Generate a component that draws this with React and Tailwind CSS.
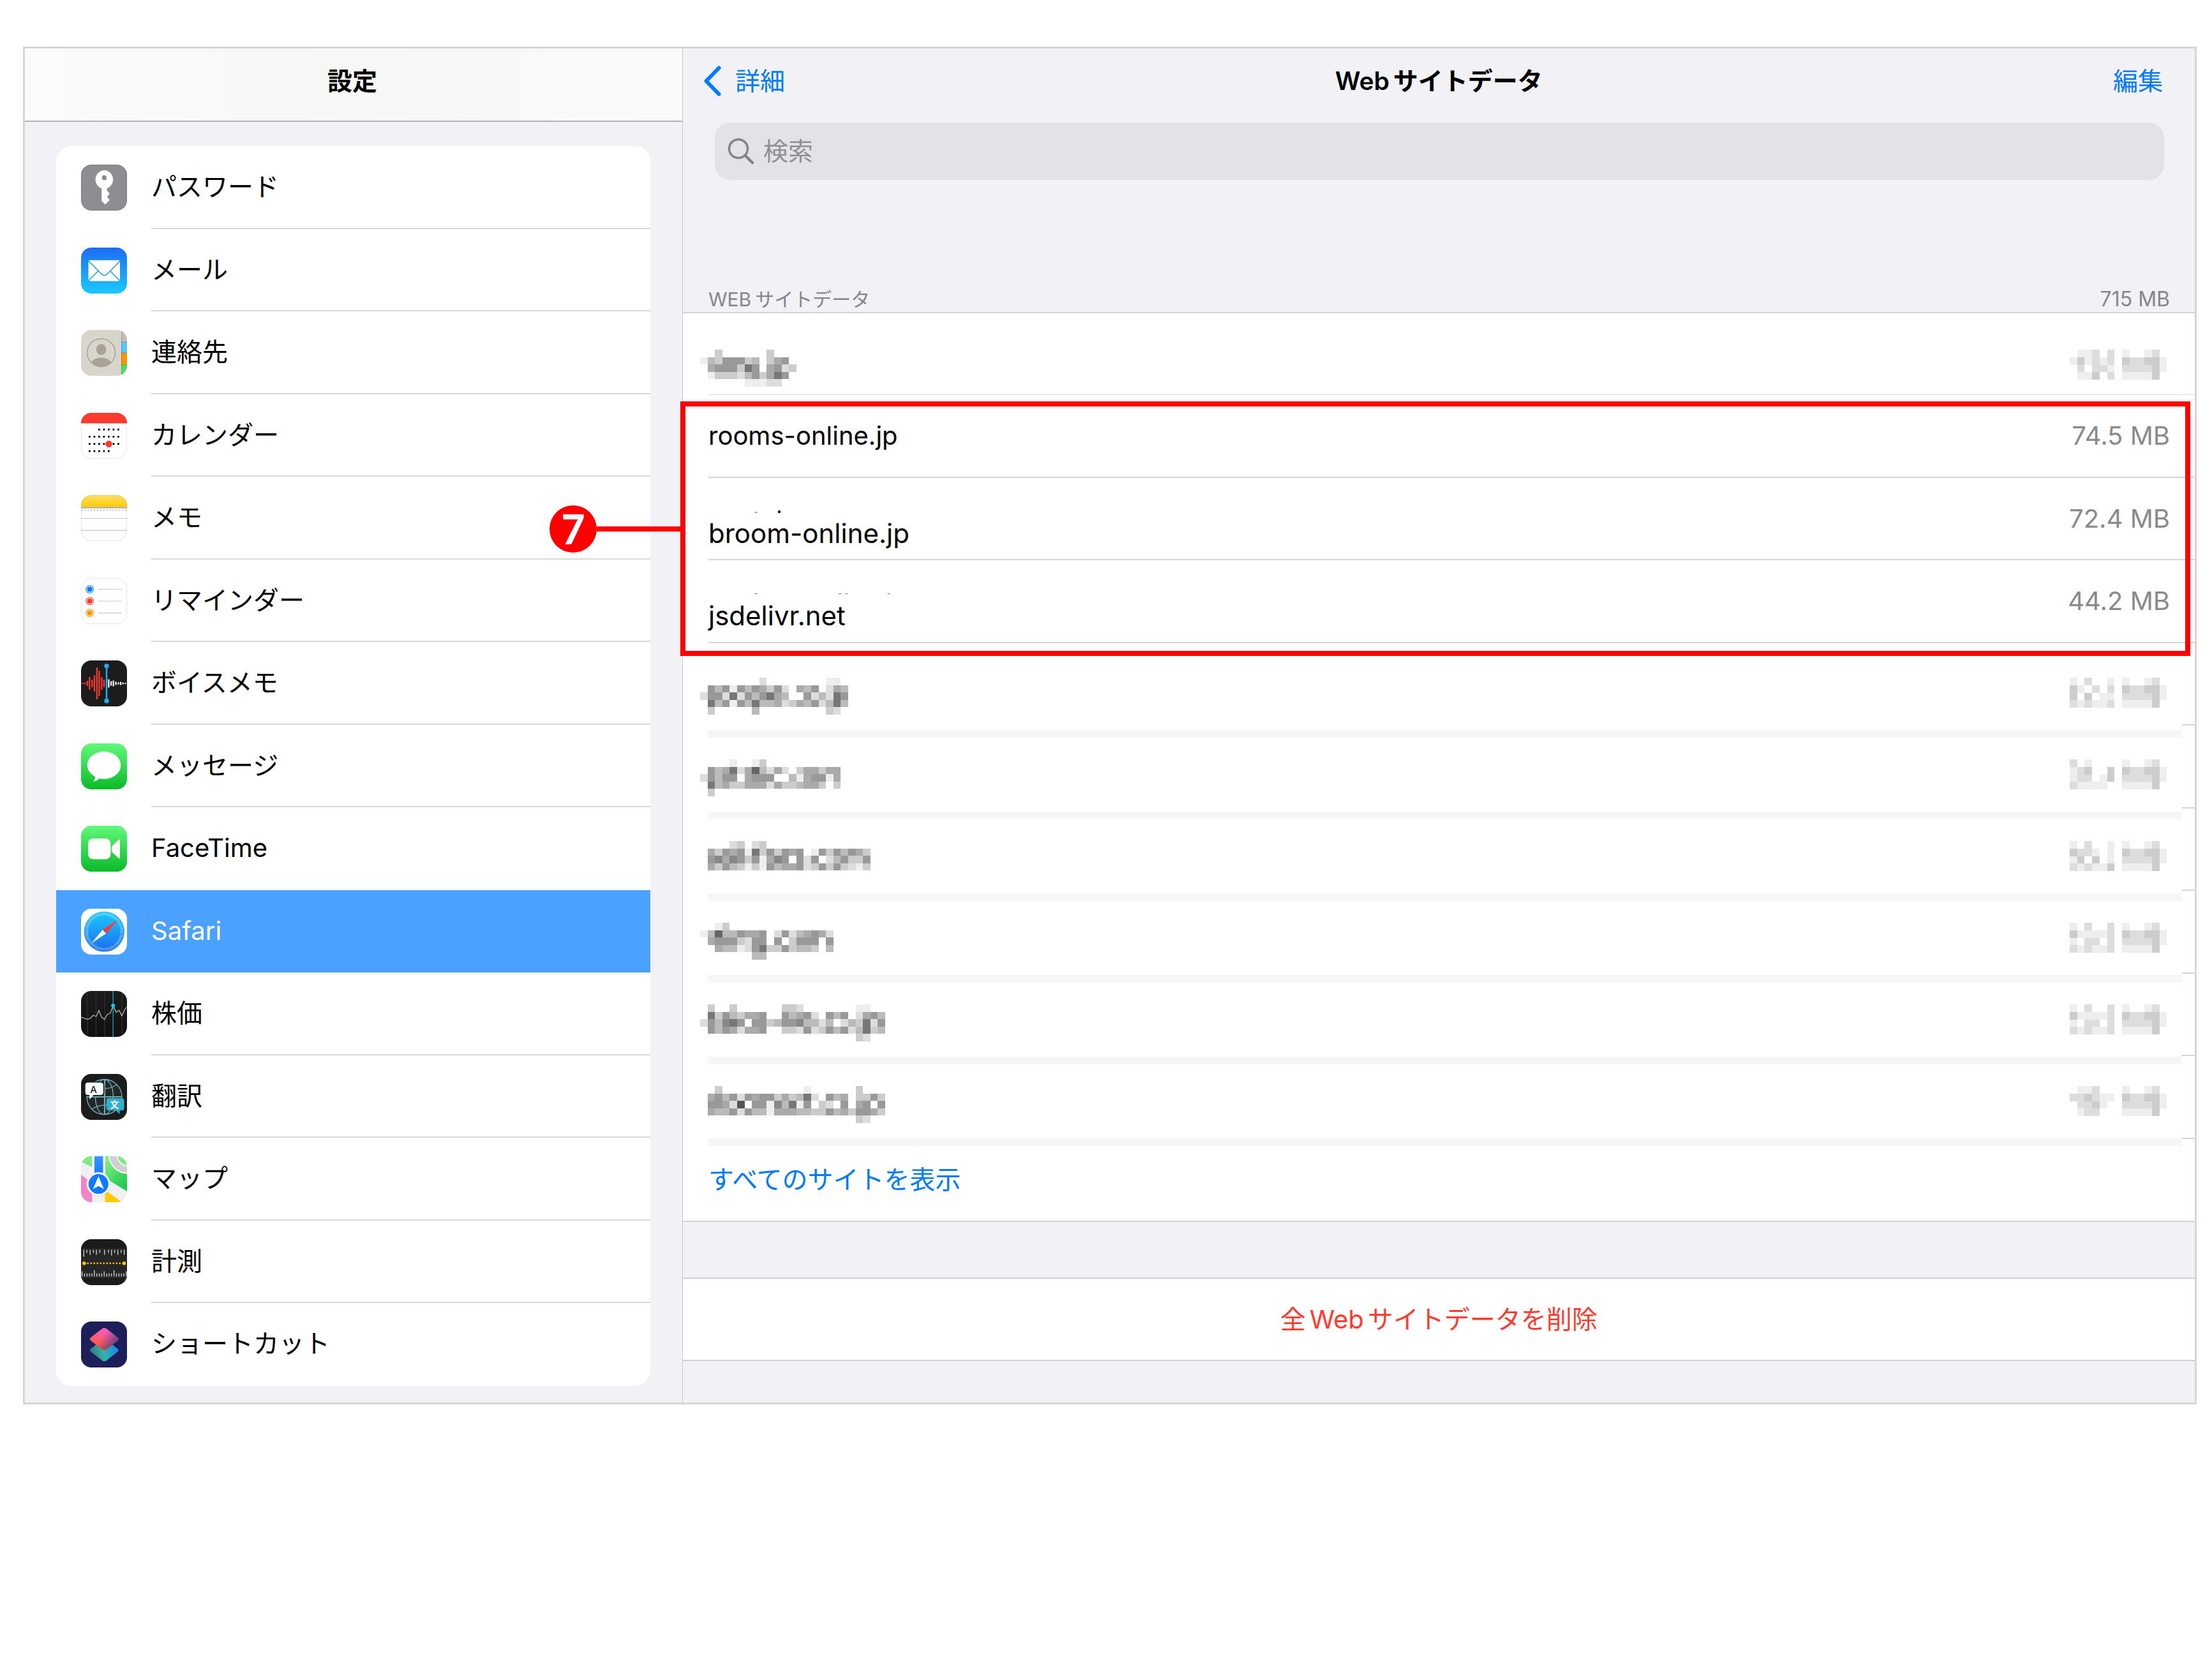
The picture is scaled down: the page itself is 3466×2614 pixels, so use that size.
import React from "react";

const CELL = 12;

/* Pixelated blocks: every character is one cell, a hex digit gives its grey, "." is empty. */
function Mosaic({ rows, className }) {
  const cols = Math.max(...rows.map((r) => r.length));
  return (
    <svg
      aria-hidden="true"
      viewBox={`0 0 ${cols * CELL} ${rows.length * CELL}`}
      style={{ aspectRatio: `${cols} / ${rows.length}` }}
      className={className}
      shapeRendering="crispEdges"
    >
      {rows.flatMap((row, y) =>
        [...row].map((c, x) =>
          c === "." ? null : (
            <rect
              key={`${x}-${y}`}
              x={x * CELL}
              y={y * CELL}
              width={CELL}
              height={CELL}
              fill={`#${c}${c}${c}`}
            />
          )
        )
      )}
    </svg>
  );
}

const MB = ["e..edf", "cddcce", "ddddce", "eeeecf"];
const size = (digits) => digits.map((d, i) => d + MB[i]);

const firstRedacted = {
  name: ["..c......c...", "ebc999cb.ca9f", ".a999c79.a9dc", ".ecccdb9ca79f", "......eeedd.."],
  size: size(["..eed.d.", ".eceded.", "..dfdde.", "..eecfd."]),
};

const redacted = [
  {
    name: ["........df.......ee.", ".9b9e9b9ac9d.ab9fdab", "d99d7d9b97ab.f9dbd79", ".7b9e9b7bbadcab9db7b", ".c.....b.........cd."],
    size: size([".efdf.e.", ".cefdfd.", ".c.c.ee.", ".dedeed."]),
  },
  {
    name: ["....e..ec..........", ".9ba7da6bdadfcaacaa", "d9b99fa999.fbea99ea", ".7baccaaadaccbaacfc", ".c................."],
    size: size([".dfef.f.", ".edcf.c.", ".eddfec.", ".deeee.."]),
  },
  {
    name: ["....dcfdc..............", ".ac9a9e7c9c9a9fe9c9b9ac", "f98a89c9ea89f9d9fdb9cc9", "fac9bcece9baa9dc9c9cdec", "......................."],
    size: size([".efdf.e.", ".cdde.e.", ".ecfc.e.", ".dedeec."]),
  },
  {
    name: ["..ec..............", "eb6bb9aa9.d9dba9ad", ".a999cd99.9.c999f9", ".fabbed97cc9cbbcfb", ".......bb........."],
    size: size([".efd..d.", ".ceeeed.", ".efdd.d.", ".dedeed."]),
  },
  {
    name: [".c..c......ccd.......ee..", ".7c9bcaa9..9ba9d.9b9fda9b", "d9b879.99cb998bbdbfdbc7d9", ".9b9adaa9..ccd9dc9b9db7cb", ".....................cdf."],
    size: size([".efd..d.", ".ceeeed.", ".efdd.d.", ".dedeed."]),
  },
  {
    name: ["..c...........e......c...", ".a9b9d9a99cacb7df9ba.cc9c", "f99ad5f99e8b7e9.cdf9.a9.9", ".abb9d9bbeaaabbcc9bac99ac", ".....................cd.."],
    size: size([".feed...", ".ddcdee.", "..ddce..", "..eddf.."]),
  },
];

function Icon({ id, children, bg, outline }) {
  return (
    <svg viewBox="0 0 72 72" className="size-18 shrink-0" aria-hidden="true">
      <defs>
        <clipPath id={`clip-${id}`}>
          <rect width="72" height="72" rx="16" />
        </clipPath>
      </defs>
      <g clipPath={`url(#clip-${id})`}>
        <rect width="72" height="72" fill={bg} />
        {children}
      </g>
      {outline && (
        <rect x="0.5" y="0.5" width="71" height="71" rx="15.5" fill="none" stroke="#000" strokeOpacity="0.1" />
      )}
    </svg>
  );
}

function Gradient({ id, from, to }) {
  return (
    <linearGradient id={id} x1="0" y1="0" x2="0" y2="1">
      <stop offset="0" stopColor={from} />
      <stop offset="1" stopColor={to} />
    </linearGradient>
  );
}

const PasswordIcon = () => (
  <Icon id="password" bg="#8e8d92" outline>
    <path
      fill="#fff"
      fillRule="evenodd"
      d="M36.4 8.8a14.3 14.6 0 0 0-4.2 28.4V57l5.8 5.6 6.8-7-4-5 4-5-4.3-5V37.200a14.300 14.600 0 0 0-4.100-28.400zm0 7.800a3.700 4 0 1 1 0 8 3.700 4 0 0 1 0-8z"
    />
  </Icon>
);

const MailIcon = () => (
  <Icon id="mail" bg="url(#g-mail)">
    <defs>
      <Gradient id="g-mail" from="#1d6cf2" to="#1ac9fd" />
    </defs>
    <rect x="11.500" y="19.800" width="49.500" height="32.600" rx="2" fill="#fff" />
    <path
      d="M11.500 20.500l20 20.500q5 5 10 0l20-20.500M11.500 52l15.500-15.500M61 52l-15.500-15.500"
      fill="none"
      stroke="#2196f7"
      strokeWidth="1.500"
    />
  </Icon>
);

const ContactsIcon = () => (
  <Icon id="contacts" bg="#d8d5cb">
    <defs>
      <clipPath id="clip-face">
        <circle cx="31.600" cy="35.700" r="22" />
      </clipPath>
    </defs>
    <rect x="63" width="9" height="18.500" fill="#c1beb6" />
    <rect x="63" y="18.500" width="9" height="17.500" fill="#5ac3f7" />
    <rect x="63" y="36" width="9" height="18.500" fill="#ff9500" />
    <rect x="63" y="54.500" width="9" height="17.500" fill="#4cd964" />
    <path d="M63.500 0v72M63 18.500h9M63 36h9M63 54.500h9" stroke="#000" strokeOpacity="0.2" />
    <circle cx="31.600" cy="35.700" r="22" fill="none" stroke="#a9a19a" strokeWidth="1.500" />
    <g fill="#a9a19a" clipPath="url(#clip-face)">
      <ellipse cx="31.600" cy="30.700" rx="7.800" ry="8.600" />
      <ellipse cx="31.600" cy="55.500" rx="17" ry="12" />
    </g>
  </Icon>
);

const calendarDots = [
  [2, 3, 4, 5, 6],
  [0, 1, 2, 3, 4, 5, 6],
  [0, 1, 2, 3, 5, 6],
  [0, 1, 2, 3, 4],
];
const CalendarIcon = () => (
  <Icon id="calendar" bg="#fff" outline>
    <rect width="72" height="16.400" fill="#ff3b30" />
    {calendarDots.flatMap((cols, r) =>
      cols.map((c) => (
        <rect key={`${r}-${c}`} x={12 + c * 7.5} y={24.700 + r * 11.300} width="2.800" height="2.800" fill="#000" />
      ))
    )}
    <circle cx="43.500" cy="48.700" r="5.200" fill="#ff3b30" />
  </Icon>
);

const NotesIcon = () => (
  <Icon id="notes" bg="#fff" outline>
    <defs>
      <Gradient id="g-notes" from="#fee066" to="#fecb02" />
    </defs>
    <rect width="72" height="18.500" fill="url(#g-notes)" />
    <rect y="18.500" width="72" height="2" fill="#aba69a" />
    <path d="M0.500 23.500h72" stroke="#c9c9c9" strokeWidth="2.400" strokeDasharray="2 2.900" />
    <path d="M0 36.500h72M0 55.200h72" stroke="#c3c3c3" strokeWidth="1.200" />
  </Icon>
);

const RemindersIcon = () => (
  <Icon id="reminders" bg="#fff" outline>
    {[
      ["#007aff", 17.5],
      ["#ff3b30", 36],
      ["#ff9500", 54.6],
    ].map(([color, y]) => (
      <g key={color}>
        <circle cx="13.600" cy={y} r="5.800" fill="none" stroke={color} strokeWidth="1.100" />
        <circle cx="13.600" cy={y} r="4.100" fill={color} />
        <path d={`M27 ${y}h36.500`} stroke="#c7c7cc" strokeWidth="1.200" />
      </g>
    ))}
  </Icon>
);

const redBars = [[2.4, 2], [6, 3], [9.9, 8], [13.4, 20], [17.4, 12], [21, 25], [24.9, 50], [28.5, 40], [32.4, 20], [36, 12]];
const whiteBars = [[43.4, 13], [47, 7], [50.6, 9], [54.6, 5], [58.5, 3], [62, 5], [65.6, 3], [69.600, 2]];
const VoiceMemosIcon = () => (
  <Icon id="voice" bg="#1c1c1c">
    {redBars.map(([x, h]) => (
      <rect key={x} x={x - 1.2} y={36 - h / 2} width="2.400" height={h} fill="#f0392f" />
    ))}
    {whiteBars.map(([x, h]) => (
      <rect key={x} x={x - 1.1} y={36 - h / 2} width="2.200" height={h} fill="#fff" />
    ))}
    <path d="M40 8.600v55" stroke="#1badf8" strokeWidth="2.600" />
    <circle cx="40" cy="8.600" r="3.700" fill="#1badf8" />
    <circle cx="40" cy="63.400" r="3.700" fill="#1badf8" />
  </Icon>
);

const MessagesIcon = () => (
  <Icon id="messages" bg="url(#g-messages)">
    <defs>
      <Gradient id="g-messages" from="#61f97a" to="#0aba28" />
    </defs>
    <path
      fill="#fff"
      d="M36 12.800c14.500 0 26.300 9.600 26.300 21.500S50.500 55.800 36 55.800c-2.600 0-5-.3-7.300-.9-2.300 2.500-5.600 4.500-9.900 4.700 2-1.800 3.300-4.200 3.500-7.400C14.800 48.200 9.700 41.700 9.700 34.300 9.700 22.400 21.500 12.800 36 12.800z"
    />
  </Icon>
);

const FaceTimeIcon = () => (
  <Icon id="facetime" bg="url(#g-facetime)">
    <defs>
      <Gradient id="g-facetime" from="#61f97a" to="#0aba28" />
    </defs>
    <rect x="11" y="20" width="35.400" height="32.500" rx="8" fill="#fff" />
    <path fill="#fff" d="M48 34.500q0-2.500 2-4.300l8.300-7.700q2.700-2.300 2.700.6v26.800q0 2.900-2.700.6L50 42.800q-2-1.800-2-4.300z" />
  </Icon>
);

const SafariIcon = () => (
  <Icon id="safari" bg="#fff">
    <defs>
      <Gradient id="g-safari" from="#1ac9fb" to="#1d6cf1" />
    </defs>
    <circle cx="36.300" cy="36" r="31.600" fill="url(#g-safari)" />
    <circle
      cx="36.300"
      cy="36"
      r="27.500"
      fill="none"
      stroke="#fff"
      strokeOpacity="0.750"
      strokeWidth="4.500"
      pathLength="72"
      strokeDasharray="0.300 0.700"
    />
    <path d="M58 17L33.800 33l5.200 6z" fill="#ff3b30" />
    <path d="M16 54.500L33.800 33l5.200 6z" fill="#fff" />
  </Icon>
);

const StocksIcon = () => (
  <Icon id="stocks" bg="url(#g-stocks)">
    <defs>
      <Gradient id="g-stocks" from="#1c1c1c" to="#101010" />
    </defs>
    <path d="M10 0v72M23.500 0v72M37 0v72M64 0v72" stroke="#2c2c2c" strokeWidth="1.500" />
    <path d="M50.200 0v72" stroke="#1a93bd" strokeWidth="1.500" />
    <path
      d="M0 41l10 3.300 4.600-1.300 4.400-5 4.700 2 4.300-9.300 4.400 10.700 4.400 3.200L41 37l5-2.700 4.200-10.700L55 33l4.700-2.600L64 39l4.400-9.700L72 25"
      fill="none"
      stroke="#b5b5b5"
      strokeWidth="1.300"
    />
    <circle cx="50.200" cy="23" r="3" fill="#1ac8fc" />
  </Icon>
);

const TranslateIcon = () => (
  <Icon id="translate" bg="#1c1c1c">
    <g fill="none" stroke="#68adb8" strokeWidth="1.400">
      <circle cx="36.500" cy="36" r="27.500" fill="#262626" />
      <path d="M37 8.500v55M9 36h55" strokeWidth="2.200" />
      <ellipse cx="36.500" cy="36" rx="14" ry="27.500" />
      <path d="M17 17q19.500 12 39 0M17 55q19.500-12 39 0" />
    </g>
    <rect x="5" y="12" width="31.500" height="23" rx="5.500" fill="#1c1c1c" />
    <path
      fill="#fff"
      d="M10.700 13.600h20.100a4 4 0 0 1 4 4V29a4 4 0 0 1-4 4H19.500l-6.300 7V33h-2.500a4 4 0 0 1-4-4V17.600a4 4 0 0 1 4-4z"
    />
    <path
      fill="#32afcb"
      d="M43.500 38h20.100a4 4 0 0 1 4 4v11.200a4 4 0 0 1-4 4H60.500v5.800l-6-5.800h-11a4 4 0 0 1-4-4V42a4 4 0 0 1 4-4z"
    />
    <text x="19.500" y="29.500" textAnchor="middle" fontSize="15" fontWeight="500" fill="#1c1c1c">A</text>
    <text x="52.500" y="53" textAnchor="middle" fontSize="14" fontWeight="700" fill="#fff">文</text>
  </Icon>
);

const MapsIcon = () => (
  <Icon id="maps" bg="#f1f1f5">
    <defs>
      <linearGradient id="g-maps" x1="0" y1="0" x2="0.600" y2="1">
        <stop offset="0.100" stopColor="#87ee83" />
        <stop offset="1" stopColor="#1fca50" />
      </linearGradient>
      <Gradient id="g-road" from="#3d95ff" to="#0a79ff" />
    </defs>
    <path d="M0 8.500l17.400 8.700V0H0z" fill="#82e982" />
    <path d="M37.600 0H72v55L37.600 34z" fill="url(#g-maps)" />
    <circle cx="73" cy="-2" r="29.800" fill="#fff" />
    <circle cx="73" cy="-2" r="27.800" fill="#cfcfd4" />
    <circle cx="73" cy="-2" r="17.600" fill="#fff" />
    <circle cx="73" cy="-2" r="15.600" fill="#7de97f" />
    <path d="M0 29l17.400 13v30H0z" fill="#f283c9" />
    <path d="M37.600 53l27 19h-27z" fill="#ffcb00" />
    <path d="M18.500 0v40M37 0v34" stroke="#fff" strokeWidth="1.500" />
    <rect x="21" width="13.400" height="34" fill="url(#g-road)" />
    <circle cx="27.300" cy="44.500" r="19.500" fill="#000" fillOpacity="0.050" />
    <circle cx="27.300" cy="43.600" r="18.700" fill="#f4f5fb" />
    <circle cx="27.300" cy="43.600" r="15.500" fill="#0c7bff" />
    <path d="M27.300 31.500l8.700 20-8.700-4.800-8.700 4.800z" fill="#fff" />
  </Icon>
);

const topTicks = [[4.3, 11], [9, 5], [14.2, 8], [19.4, 5], [24, 8], [29.3, 5], [36.8, 8], [43, 5], [47.8, 9], [52.6, 5], [57.7, 8], [62.9, 5], [67.6, 8]];
const MeasureIcon = () => (
  <Icon id="measure" bg="#1b1b1b">
    <rect y="13.500" width="72" height="47.500" fill="#262626" />
    {topTicks.map(([x, h]) => (
      <rect key={x} x={x - 0.6} y="16.500" width="1.200" height={h} fill="#e8e8e8" />
    ))}
    {Array.from({ length: 19 }, (_, i) => {
      const h = i === 5 || i === 13 ? 10 : i % 9 === 0 ? 8 : 5;
      return <rect key={i} x={1 + i * 3.85} y={58.5 - h} width="1.200" height={h} fill="#e8e8e8" />;
    })}
    <path d="M9.500 37.700h54" stroke="#ffcc00" strokeWidth="2.600" strokeDasharray="2.300 2.700" />
    <circle cx="4.900" cy="37.700" r="2.800" fill="#ffcc00" />
    <circle cx="67.400" cy="37.700" r="2.800" fill="#ffcc00" />
  </Icon>
);

const diamond = "M33.300 11q3-2.200 6.200 0L57 24.800q3.500 2.700 0 5.400L39.500 44q-3 2.200-6.200 0L15.500 30.200q-3.500-2.700 0-5.400z";
const ShortcutsIcon = () => (
  <Icon id="shortcuts" bg="#1d1f5b">
    <defs>
      <linearGradient id="g-low" x1="0" y1="0.300" x2="1" y2="0.100">
        <stop offset="0" stopColor="#2f7d86" />
        <stop offset="0.400" stopColor="#35b3a6" />
        <stop offset="1" stopColor="#1380ff" />
      </linearGradient>
      <linearGradient id="g-up" x1="0.200" y1="0.900" x2="0.600" y2="0">
        <stop offset="0.200" stopColor="#ff5a4c" />
        <stop offset="1" stopColor="#f75fd0" />
      </linearGradient>
      <linearGradient id="g-up-shade" x1="0.300" y1="0.300" x2="1" y2="0.700">
        <stop offset="0.200" stopColor="#5b3a7c" stopOpacity="0" />
        <stop offset="0.900" stopColor="#55407c" stopOpacity="0.900" />
      </linearGradient>
    </defs>
    <path d="M33.500 28.500q3-2 6 0L57 42.500q3.500 2.500 0 5L39.500 61.500q-3 2.200-6 0L15.500 47.500q-3.500-2.500 0-5z" fill="url(#g-low)" />
    <path d={diamond} fill="url(#g-up)" />
    <path d={diamond} fill="url(#g-up-shade)" />
  </Icon>
);

const apps = [
  ["パスワード", PasswordIcon],
  ["メール", MailIcon],
  ["連絡先", ContactsIcon],
  ["カレンダー", CalendarIcon],
  ["メモ", NotesIcon],
  ["リマインダー", RemindersIcon],
  ["ボイスメモ", VoiceMemosIcon],
  ["メッセージ", MessagesIcon],
  ["FaceTime", FaceTimeIcon],
  ["Safari", SafariIcon],
  ["株価", StocksIcon],
  ["翻訳", TranslateIcon],
  ["マップ", MapsIcon],
  ["計測", MeasureIcon],
  ["ショートカット", ShortcutsIcon],
];

function Sidebar() {
  return (
    <aside className="w-[1031px] shrink-0 border-r border-[#c8c8cc] pb-[26px]">
      <header className="flex h-[115px] items-center justify-center border-b-2 border-[#b2b2b7] bg-linear-to-r from-[#fbfbfb] via-[#f7f7f6] to-[#fafafb] pr-1 pb-3">
        <h1 className="text-[39px] leading-[52px] font-bold">設定</h1>
      </header>
      <nav aria-label="設定" className="mt-[38px] mr-[50px] ml-[49px] overflow-hidden rounded-3xl bg-white">
        <ul>
          {apps.map(([name, AppIcon], i) => {
            const selected = name === "Safari";
            const line = !selected && name !== "FaceTime" && i < apps.length - 1;
            return (
              <li key={name} className="odd:h-[130px] even:h-[129px]">
                <a
                  href="#"
                  aria-current={selected ? "page" : undefined}
                  className={`flex h-full items-center gap-[38px] pl-[39px] ${selected ? "bg-[#4ba1ff] text-white" : ""}`}
                >
                  <AppIcon />
                  <span
                    className={`flex h-full flex-1 items-center border-b-2 text-[40px] leading-[52px] ${
                      line ? "border-[#d9d9da]" : "border-transparent"
                    }`}
                  >
                    {name}
                  </span>
                </a>
              </li>
            );
          })}
        </ul>
      </nav>
    </aside>
  );
}

const sites = [
  { name: "rooms-online.jp", size: "74.5 MB" },
  {
    name: "broom-online.jp",
    size: "72.4 MB",
    marks: [
      [73, 2, 4, 2, "#aaa"],
      [109, 0, 4, 4, "#222"],
    ],
  },
  {
    name: "jsdelivr.net",
    size: "44.2 MB",
    marks: [
      [73, 1, 4, 1, "#777"],
      [204, 1, 4, 1, "#777"],
      [214, 1, 4, 1, "#777"],
      [281, 1, 4, 1, "#777"],
    ],
  },
];

function SiteRow({ site }) {
  return (
    <li className="flex justify-between pl-10 odd:h-[130px] even:h-[129px]">
      <div className="flex flex-1 items-center justify-between border-b-2 border-[#d5d5d6] pr-[39px]">
        {site.marks ? (
          <div className="pt-9">
            <svg aria-hidden="true" viewBox="0 0 300 4" className="h-1 w-[300px]">
              {site.marks.map(([x, y, w, h, fill]) => (
                <rect key={x} x={x} y={y} width={w} height={h} fill={fill} />
              ))}
            </svg>
            <p className="pt-1.5 text-[42px] leading-[52px]">{site.name}</p>
          </div>
        ) : (
          <p className="leading-[52px]">{site.name}</p>
        )}
        <p className="leading-[52px] text-[#8a8a8e]">{site.size}</p>
      </div>
    </li>
  );
}

function Redacted({ row, className }) {
  return (
    <div className={`flex items-start justify-between pl-[27px] ${className}`}>
      <Mosaic rows={row.name} className="h-[58px]" />
      <Mosaic rows={row.size} className="h-[47px]" />
    </div>
  );
}

function Callout() {
  return (
    <div className="pointer-events-none absolute top-2.5 right-[7px] -bottom-5 -left-1 border-8 border-[#f00]">
      <div className="absolute inset-y-0 right-full mr-2 flex items-center">
        <span className="flex size-[74px] items-center justify-center rounded-full bg-[#f00] font-['Lato'] text-[64px] leading-none font-black text-white">
          7
        </span>
        <span className="h-2 w-[131px] bg-[#f00]" />
      </div>
    </div>
  );
}

function WebsiteData() {
  return (
    <main className="flex min-w-0 flex-1 flex-col">
      <header className="grid h-[116px] grid-cols-[1fr_auto_1fr] items-center px-8 pb-3.5 text-[39px] leading-[52px]">
        <button type="button" className="flex items-center gap-[22px] justify-self-start text-[#007aff]">
          <svg aria-hidden="true" viewBox="0 0 28 48" className="h-12 w-7">
            <path d="M24.500 3.500L4.500 24l20 20.500" fill="none" stroke="#007aff" strokeWidth="6" strokeLinecap="round" strokeLinejoin="round" />
          </svg>
          詳細
        </button>
        <h2 className="font-semibold">
          <span className="mr-1.5">Web</span>サイトデータ
        </h2>
        <button type="button" className="mr-[18px] justify-self-end text-[#007aff]">
          編集
        </button>
      </header>

      <label className="mr-12 ml-[50px] flex h-[90px] items-center gap-3.5 rounded-3xl bg-[#e3e2e7] pl-5">
        <svg aria-hidden="true" viewBox="0 0 42 42" className="size-[42px] shrink-0">
          <circle cx="17" cy="17" r="14.500" fill="none" stroke="#838388" strokeWidth="3.500" />
          <path d="M28 28l11 11" stroke="#838388" strokeWidth="4.500" strokeLinecap="round" />
        </svg>
        <input
          type="search"
          aria-label="検索"
          placeholder="検索"
          className="h-full min-w-0 flex-1 bg-transparent pb-0.5 text-[39px] outline-none placeholder:text-[#8f8f94]"
        />
      </label>

      <div className="flex h-[207px] items-end justify-between pr-[39px] pl-10 text-[30px] leading-10 text-[#85858b]">
        <h3>
          <span className="mr-1.5">WEB</span>サイトデータ
        </h3>
        <p className="text-[32px]">715 MB</p>
      </div>

      <section className="border-y-2 border-[#d3d3d6] bg-white text-[40px]">
        <div className="h-32 pt-[57px]">
          <Redacted row={firstRedacted} className="pr-11" />
          <div className="mt-3 ml-10 h-px bg-[#dcdcdd]" />
        </div>

        <div className="relative">
          <ul>
            {sites.map((site) => (
              <SiteRow key={site.name} site={site} />
            ))}
          </ul>
          <Callout />
        </div>

        <div className="grid grid-cols-[1fr_20px]">
          <div className="pt-5">
            {redacted.map((row, i) => (
              <div key={i} className="flex h-32 flex-col justify-between pt-[34px]">
                <Redacted row={row} className="pr-6" />
                <div className="ml-[39px] h-3 bg-[#f6f6f6]" />
              </div>
            ))}
          </div>
          <div>
            {redacted.map((_, i) => (
              <div key={i} className="h-[129px] border-b-2 border-[#d5d5d6] even:h-[130px]" />
            ))}
          </div>
        </div>

        <div className="flex h-[117px] items-center pb-3 pl-10">
          <button type="button" className="leading-[52px] text-[#007aff]">
            すべてのサイトを表示
          </button>
        </div>
      </section>

      <button
        type="button"
        className="mt-[87px] h-[131px] border-y-2 border-[#d0d0d4] bg-white text-[40px] leading-[52px] text-[#ff3b30]"
      >
        全<span className="mx-1.5">Web</span>サイトデータを削除
      </button>
    </main>
  );
}

export default function App() {
  return (
    <div className="bg-white pt-[73px] pr-6 pl-9 font-['Inter','Noto_Sans_CJK_JP',sans-serif] text-black" lang="ja">
      <div className="flex border-3 border-[#d6d6d6] bg-[#f2f1f6]">
        <Sidebar />
        <WebsiteData />
      </div>
    </div>
  );
}
